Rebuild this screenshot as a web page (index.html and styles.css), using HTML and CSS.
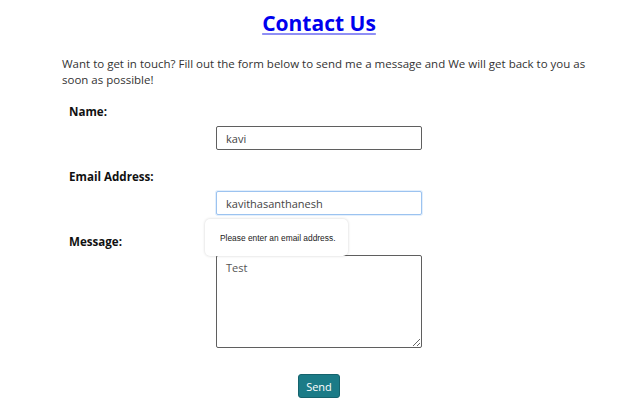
FILE: index.html
```html
<!DOCTYPE html>
<html>
<head>
<meta charset="utf-8">
<link rel="stylesheet" href="styles.css">
</head>
<body>
<main class="page">
  <h1 class="title"><a href="#">Contact Us</a></h1>
  <p class="intro">Want to get in touch? Fill out the form below to send me a message and We will get back to you as soon as possible!</p>
  <form class="form">
    <label class="label">Name:</label>
    <div class="field"><input class="input" type="text" value="kavi"></div>
    <label class="label">Email Address:</label>
    <div class="field field-email">
      <input class="input input-focus" type="text" value="kavithasanthanesh">
      <div class="tooltip">Please enter an email address.</div>
    </div>
    <label class="label label-msg">Message:</label>
    <div class="field field-msg"><textarea class="textarea">Test</textarea></div>
    <div class="actions"><button class="send" type="button">Send</button></div>
  </form>
</main>
</body>
</html>
```
FILE: styles.css
```css
* { box-sizing: border-box; }
body { margin: 0; background: #fff; font-family: "Open Sans", sans-serif; color: #222; }
.page { padding: 11px 36px 0 62px; }
.title { margin: 0; text-align: center; font-size: 21px; font-weight: 700; line-height: 25px; padding-right: 14px; }
.title a { color: #0000ee; text-decoration: underline; text-decoration-color: #8f8ff5; text-underline-offset: 2px; }
.intro { margin: 20px 0 0; font-size: 11.5px; line-height: 16px; color: #333; }
.form { padding-left: 7px; margin-top: 16px; }
.label { display: block; font-size: 11.6px; font-weight: 700; line-height: 16px; color: #111; }
.field { margin: 6px 0 0 147px; position: relative; }
.field-msg { margin-top: 5px; }
.input { display: block; width: 206px; height: 24px; border: 1px solid #5f5f5f; border-radius: 2px; padding: 0 9px; font-family: "Open Sans", sans-serif; font-size: 11px; color: #444; outline: none; }
.form .field + .label { margin-top: 19px; }
.input-focus { border-color: #9cc3f0; box-shadow: 0 0 0 1px #e3effc; }
.tooltip { position: absolute; left: -11px; top: 28px; width: 143px; height: 37px; background: #fff; border-radius: 5px; box-shadow: 0 0 3px rgba(0,0,0,0.18); font-family: "Liberation Sans", Arial, sans-serif; font-size: 8.4px; color: #222; padding: 14px 0 0 15px; z-index: 2; }
.label-msg { margin-top: 19px; }
.textarea { display: block; width: 206px; height: 93px; border: 1px solid #5f5f5f; border-radius: 2px; padding: 4px 9px; font-family: "Open Sans", sans-serif; font-size: 11px; color: #555; resize: both; }
.actions { display: flex; justify-content: center; margin-top: 26px; padding-right: 21px; }
.send { background: #1b7b87; color: #fff; border: 1px solid #15636d; border-radius: 3px; width: 42px; height: 24px; font-family: "Open Sans", sans-serif; font-size: 11px; padding: 0; }
```
